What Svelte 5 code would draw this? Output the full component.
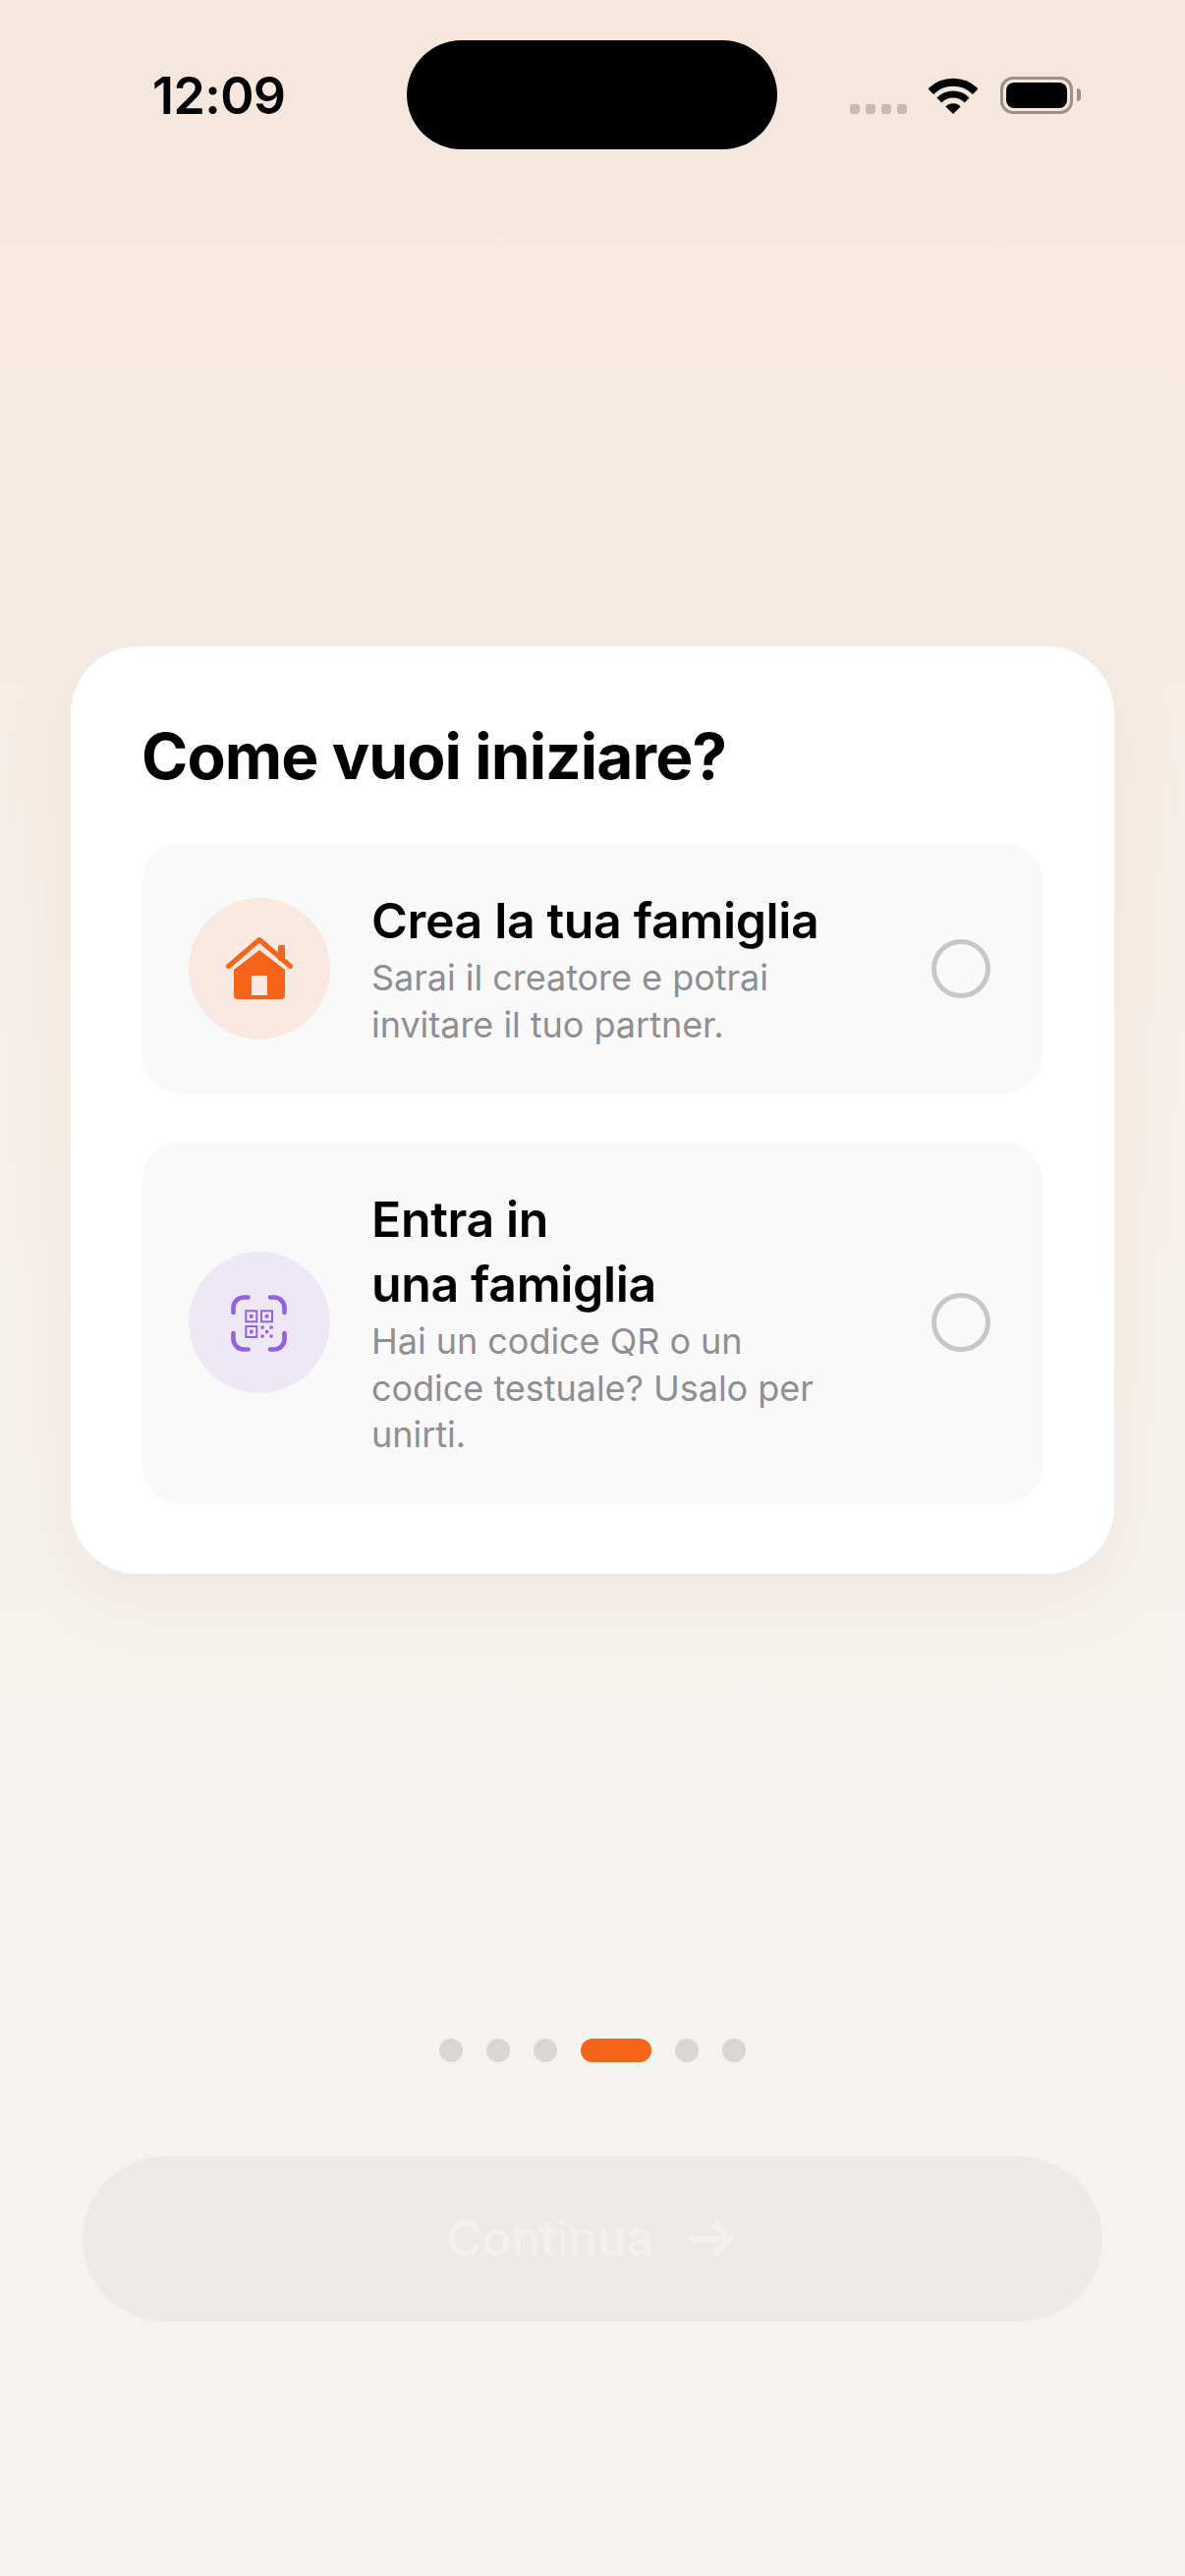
<script lang="ts">
  // Onboarding step: how the user wants to start (new family or join one).
  const steps = [0, 1, 2, 3, 4, 5];
  const current = 3;

  const options = [
    {
      id: 'create',
      title: 'Crea la tua famiglia',
      text: 'Sarai il creatore e potrai invitare il tuo partner.'
    },
    {
      id: 'join',
      title: 'Entra in una famiglia',
      text: 'Hai un codice QR o un codice testuale? Usalo per unirti.'
    }
  ];

  let selected: string | null = $state(null);

  // little modules in the corner of the QR glyph
  const qrBits = [
    [43.5, 45.5],
    [52.5, 45.5],
    [48, 50],
    [43.5, 54.5],
    [52.5, 54.5]
  ];
</script>

<div class="page">
  <header class="status">
    <span class="time">12:09</span>
    <div class="island"></div>
    <div class="indicators">
      <div class="signal">
        <i></i><i></i><i></i><i></i>
      </div>
      <svg class="wifi" width="50" height="38" viewBox="0 0 50 38">
        <path d="M2.2 15.2A32 32 0 0 1 47.8 15.2" fill="none" stroke="#000" stroke-width="8" />
        <path d="M10.9 23.9A20 20 0 0 1 39.1 23.9" fill="none" stroke="#000" stroke-width="7" />
        <path d="M25 38L17.4 30.4A10.8 10.8 0 0 1 32.6 30.4Z" fill="#000" />
      </svg>
      <div class="battery"><div class="level"></div></div>
    </div>
  </header>

  <section class="card">
    <h1>Come vuoi iniziare?</h1>
    {#each options as option (option.id)}
      <button
        type="button"
        class="option"
        class:selected={selected === option.id}
        onclick={() => (selected = option.id)}
      >
        <span class="badge {option.id}">
          {#if option.id === 'create'}
            <svg width="84" height="84" viewBox="0 0 84 84">
              <path d="M10.5 39.5L42 12.5L73.5 39.5" fill="none" stroke="#f4651b" stroke-width="5" stroke-linecap="round" stroke-linejoin="round" />
              <rect x="61" y="18" width="7" height="16" rx="1.5" fill="#f4651b" />
              <path d="M16 43L42 23L68 43V69a4 4 0 0 1-4 4H20a4 4 0 0 1-4-4Z" fill="#f4651b" />
              <rect x="34" y="49" width="16" height="20" rx="1" fill="#f9e9e1" />
            </svg>
          {:else}
            <svg width="84" height="84" viewBox="0 0 84 84">
              <g fill="none" stroke="#9360e6" stroke-width="4.6" stroke-linecap="round">
                <path d="M15.5 32V27A10.5 10.5 0 0 1 26 16.5H30.5" />
                <path d="M53 16.5H57A10.5 10.5 0 0 1 67.5 27V32" />
                <path d="M15.5 53V59A10.5 10.5 0 0 0 26 69.5H30.5" />
                <path d="M53 69.5H57A10.5 10.5 0 0 0 67.5 59V53" />
              </g>
              <g fill="none" stroke="#9360e6" stroke-width="2">
                <rect x="28.3" y="30.3" width="11" height="11" />
                <rect x="44" y="30.3" width="11" height="11" />
                <rect x="28.3" y="46" width="11" height="11" />
              </g>
              <g fill="#9360e6">
                <rect x="32" y="34" width="3.6" height="3.6" />
                <rect x="47.7" y="34" width="3.6" height="3.6" />
                <rect x="32" y="49.7" width="3.6" height="3.6" />
                {#each qrBits as [x, y]}
                  <rect {x} {y} width="3.2" height="3.2" />
                {/each}
              </g>
            </svg>
          {/if}
        </span>
        <span class="copy">
          <span class="title">{option.title}</span>
          <span class="text">{option.text}</span>
        </span>
        <span class="radio"></span>
      </button>
    {/each}
  </section>

  <div class="dots">
    {#each steps as step (step)}
      <span class="dot" class:active={step === current}></span>
    {/each}
  </div>

  <button type="button" class="next" disabled={selected === null}>
    Continua
    <svg width="44" height="36" viewBox="0 0 44 36">
      <path d="M3 18H40M27 4L41 18L27 32" fill="none" stroke="currentColor" stroke-width="6" stroke-linecap="round" stroke-linejoin="round" />
    </svg>
  </button>
</div>

<style>
  :global(body) {
    margin: 0;
    background: #f5f3ef;
  }

  .page {
    height: 2622px;
    box-sizing: border-box;
    display: flex;
    flex-direction: column;
    align-items: center;
    font-family: Inter, 'Liberation Sans', sans-serif;
    background: linear-gradient(180deg, #f6e6dc 0, #f5efe9 900px, #f5f3ef 1750px);
    overflow: hidden;
  }

  .status {
    width: 100%;
    height: 111px;
    margin-top: 41px;
    position: relative;
    display: flex;
    align-items: center;
    justify-content: space-between;
    padding: 0 114px 0 155px;
    box-sizing: border-box;
  }

  .time {
    font-size: 52px;
    font-weight: 600;
    color: #000;
    letter-spacing: -0.6px;
    transform: translateY(1px);
  }

  .island {
    position: absolute;
    left: 414px;
    top: 0;
    width: 377px;
    height: 111px;
    border-radius: 56px;
    background: #000;
  }

  .indicators {
    display: flex;
    align-items: flex-end;
    height: 38px;
  }

  .signal {
    display: flex;
    gap: 6px;
    margin-right: 22px;
  }

  .signal i {
    width: 10px;
    height: 10px;
    border-radius: 3px;
    background: #c5bbb2;
  }

  .wifi {
    display: block;
    margin-right: 23px;
  }

  .battery {
    position: relative;
    width: 74px;
    height: 38px;
    box-sizing: border-box;
    border: 3px solid #9b908a;
    border-radius: 13px;
    padding: 3px;
  }

  .battery::after {
    content: '';
    position: absolute;
    right: -11px;
    top: 9px;
    width: 4px;
    height: 13px;
    border-radius: 0 5px 5px 0;
    background: #9b908a;
  }

  .level {
    height: 100%;
    border-radius: 8px;
    background: #000;
  }

  .card {
    width: 1062px;
    margin-top: 506px;
    box-sizing: border-box;
    padding: 73px 72px 71px;
    display: flex;
    flex-direction: column;
    gap: 49px;
    border-radius: 68px;
    background: #fff;
    box-shadow: 0 24px 70px rgba(214, 130, 80, 0.1);
  }

  h1 {
    margin: 0;
    font-size: 64px;
    line-height: 78px;
    font-weight: 700;
    letter-spacing: -0.9px;
    color: #000;
  }

  .option {
    display: flex;
    align-items: center;
    width: 100%;
    padding: 46px 53px 46px 48px;
    box-sizing: border-box;
    border: 0;
    border-radius: 40px;
    background: #faf9f9;
    font-family: inherit;
    text-align: left;
    cursor: pointer;
  }

  .badge {
    flex: none;
    width: 144px;
    height: 144px;
    border-radius: 50%;
    display: flex;
    align-items: center;
    justify-content: center;
  }

  .badge.create {
    background: #f9e9e1;
  }

  .badge.join {
    background: #eee7f6;
  }

  .copy {
    flex: none;
    width: 470px;
    margin: 0 100px 0 42px;
    display: flex;
    flex-direction: column;
    gap: 2px;
  }

  .title {
    font-size: 50px;
    line-height: 66px;
    font-weight: 600;
    letter-spacing: -0.35px;
    color: #000;
    text-wrap: balance;
  }

  .text {
    font-size: 36px;
    line-height: 47.5px;
    font-weight: 400;
    letter-spacing: -0.03px;
    color: #8e8e93;
  }

  .radio {
    flex: none;
    width: 60px;
    height: 60px;
    box-sizing: border-box;
    border: 5px solid #c7c7c9;
    border-radius: 50%;
  }

  .dots {
    display: flex;
    gap: 24px;
    margin-top: 473px;
  }

  .dot {
    width: 24px;
    height: 24px;
    border-radius: 12px;
    background: #d8d7d4;
  }

  .dot.active {
    width: 72px;
    background: #f4651b;
  }

  .next {
    width: 1038px;
    height: 168px;
    margin-top: 96px;
    display: flex;
    align-items: center;
    justify-content: center;
    gap: 37px;
    padding: 0 5px 0 0;
    border: 0;
    border-radius: 84px;
    background: #ecebe8;
    color: #f2f1ef;
    font-family: inherit;
    font-size: 49px;
    font-weight: 500;
  }
</style>
